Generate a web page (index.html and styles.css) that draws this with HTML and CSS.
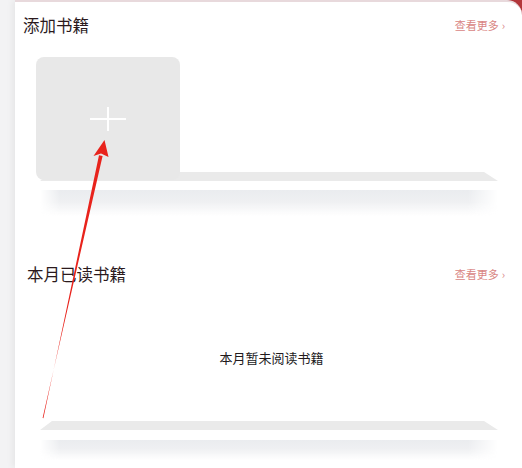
FILE: index.html
```html
<!DOCTYPE html>
<html lang="zh-CN">
<head>
<meta charset="utf-8">
<title>书架</title>
<link rel="stylesheet" href="styles.css">
</head>
<body>
<div class="panel">
  <section class="block">
    <div class="head head-add">
      <h2 class="title">添加书籍</h2>
      <a class="more">查看更多<span class="chev">›</span></a>
    </div>
    <div class="books">
      <div class="book-add">
        <svg class="plus" width="38" height="24" viewBox="0 0 38 24"><path d="M1 12H37M19 0V24" stroke="#fff" stroke-width="2" fill="none"/></svg>
      </div>
    </div>
    <div class="shelf shelf-add">
      <div class="shelf-top"></div>
      <div class="shelf-edge"></div>
      <div class="shelf-shadow"></div>
    </div>
  </section>
  <section class="block">
    <div class="head head-read">
      <h2 class="title">本月已读书籍</h2>
      <a class="more">查看更多<span class="chev">›</span></a>
    </div>
    <p class="empty">本月暂未阅读书籍</p>
    <div class="shelf shelf-read">
      <div class="shelf-top"></div>
      <div class="shelf-edge"></div>
      <div class="shelf-shadow"></div>
    </div>
  </section>
</div>
<svg class="arrow" width="522" height="468" viewBox="0 0 522 468">
  <polygon points="102.6,156 99,155.3 43.4,418.2 42.6,418" fill="#e8231c"/>
  <polygon points="104.5,140 108.5,157 101,153.5 93.5,156" fill="#e8231c"/>
</svg>
</body>
</html>
```

FILE: styles.css
```css
html, body {
  margin: 0;
  padding: 0;
}
body {
  width: 522px;
  height: 468px;
  overflow: hidden;
  position: relative;
  background-color: #f3f3f4;
  background-image: linear-gradient(#b3363a, #b3363a);
  background-repeat: no-repeat;
  background-position: top right;
  background-size: 24px 24px;
  font-family: "Noto Sans CJK SC", "Noto Sans", sans-serif;
}
.panel {
  margin-left: 15px;
  height: 466px;
  background: #fff;
  border-top: 2px solid #e8d9dc;
  border-top-right-radius: 15px;
  box-shadow: -3px 0 6px rgba(0, 0, 0, 0.05);
}
.head {
  display: flex;
  align-items: center;
  justify-content: space-between;
  height: 24px;
  padding-right: 17px;
}
.head-add {
  margin-top: 11px;
  padding-left: 8px;
}
.head-read {
  margin-top: 46px;
  padding-left: 12px;
}
.title {
  margin: 0;
  font-size: 16.5px;
  font-weight: 400;
  line-height: 24px;
  color: #2b1a1d;
}
.more {
  display: flex;
  align-items: center;
  font-size: 11px;
  line-height: 14px;
  color: #d98584;
}
.chev {
  margin-left: 3px;
  font-size: 11px;
}
.books {
  display: flex;
  margin-top: 20px;
  padding-left: 21px;
}
.book-add {
  position: relative;
  z-index: 1;
  width: 144px;
  height: 123px;
  background: #e8e8e8;
  border-radius: 8px;
  display: flex;
  align-items: center;
  justify-content: center;
}
.shelf {
  margin-left: 25px;
  margin-right: 24px;
}
.shelf-add {
  margin-top: -8px;
}
.shelf-top {
  height: 9px;
  background: #eaeaea;
  clip-path: polygon(12px 0, calc(100% - 14px) 0, 100% 100%, 0 100%);
}
.shelf-edge {
  height: 9px;
  background: #fff;
}
.shelf-shadow {
  height: 26px;
  background: linear-gradient(to bottom, #eaecef 0%, #eff0f2 45%, rgba(255, 255, 255, 0) 100%);
  -webkit-mask-image: linear-gradient(to right, transparent 0, #000 20px, #000 calc(100% - 30px), transparent 100%);
  mask-image: linear-gradient(to right, transparent 0, #000 20px, #000 calc(100% - 30px), transparent 100%);
}
.empty {
  margin: 63px 0 0;
  padding-left: 6px;
  text-align: center;
  font-size: 13px;
  line-height: 18px;
  color: #221a1c;
}
.shelf-read {
  margin-top: 54px;
}
.shelf-read .shelf-edge {
  height: 10px;
}
.shelf-read .shelf-shadow {
  height: 20px;
}
.arrow {
  position: absolute;
  left: 0;
  top: 0;
  z-index: 2;
  pointer-events: none;
}
```
